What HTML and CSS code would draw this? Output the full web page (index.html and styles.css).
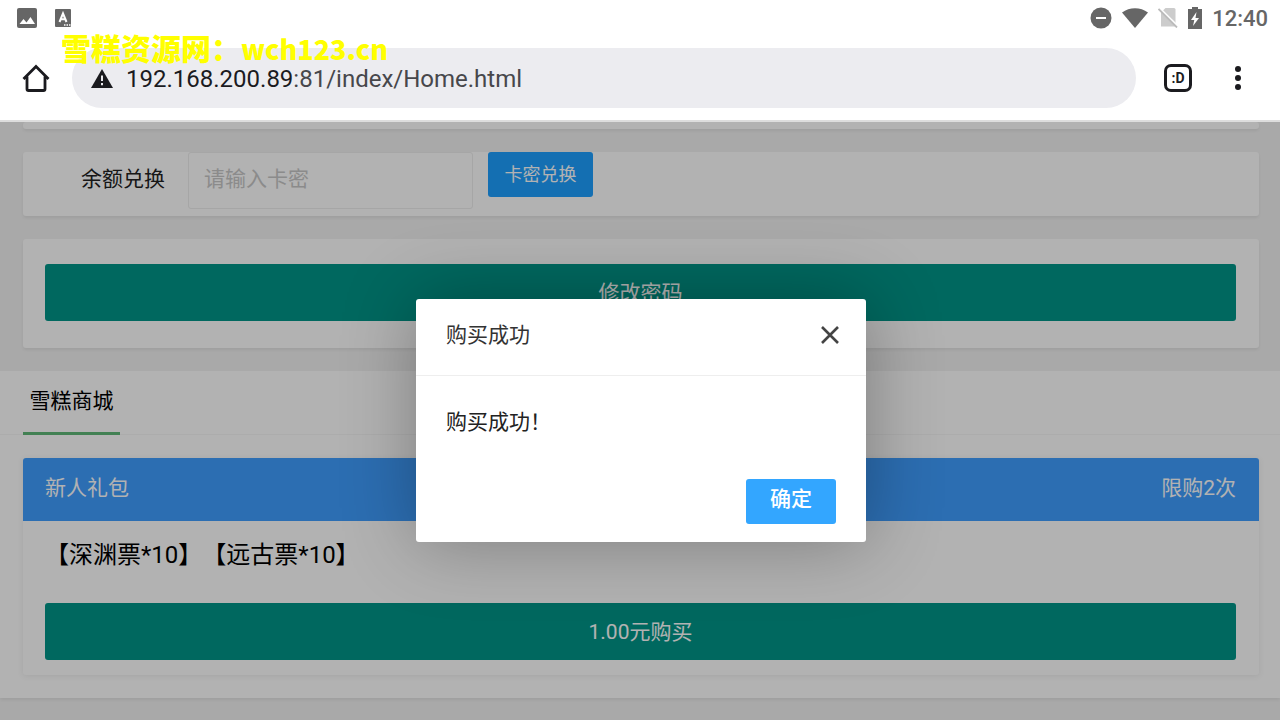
FILE: index.html
```
<!DOCTYPE html>
<html lang="zh-CN">

<head>
    <meta charset="utf-8">
    <meta name="viewport" content="width=device-width, initial-scale=1" />
    <title>Home</title>
    <link rel="stylesheet" href="styles.css">
</head>

<body>
    <div class="status">
        <svg width="20" height="20" viewBox="0 0 20 20">
            <rect width="20" height="20" rx="2" fill="#666" />
            <path d="M2.500 16 6.500 11l3 3.500 4-5.500 4.500 7z" fill="#fff" />
        </svg>
        <svg width="16" height="18" viewBox="0 0 16 18">
            <rect width="16" height="18" rx="1" fill="#666" />
            <path d="M4.500 13 8 4.500 11.500 13M5.800 10.200h4.400" fill="none" stroke="#fff" stroke-width="2" />
            <path d="M9 16h1.500M11.500 16H13M14 16h1.500" stroke="#fff" stroke-width="1.500" />
        </svg>
        <div class="status-right">
            <svg width="22" height="22" viewBox="0 0 22 22">
                <circle cx="11" cy="11" r="10.500" fill="#666" />
                <path d="M6 11h10" stroke="#fff" stroke-width="2" />
            </svg>
            <svg width="26" height="20" viewBox="0 0 26 20">
                <path d="M0 4.500C7.500-1.300 18.500-1.300 26 4.500L13 20z" fill="#666" />
            </svg>
            <svg width="20" height="20" viewBox="0 0 20 20">
                <path d="M7.500 0H16a1.500 1.500 0 0 1 1.500 1.500v17H3V4.500z" fill="#ccc" />
                <path d="M1.500 0 20 18.500" stroke="#fff" stroke-width="2" />
                <path d="M.5 1 19 19.500" stroke="#bbb" stroke-width="1.800" />
            </svg>
            <svg width="14" height="22" viewBox="0 0 14 22">
                <path d="M4 0h6v2h4v20H0V2h4z" fill="#666" />
                <path d="M8.500 5 3 13h3.300l-1.300 6L11 11H7.500z" fill="#fff" />
            </svg>
            <span class="clock">12:40</span>
        </div>
    </div>

    <div class="toolbar">
        <svg width="28" height="28" viewBox="0 0 28 28" fill="none" stroke="#1b1b1f" stroke-width="2.800">
            <path d="M1.500 15 14 2.500 26.500 15M5 12.500V25q0 1.500 1.500 1.500h15q1.500 0 1.500-1.500V12.500" />
        </svg>
        <div class="url">
            <svg width="22" height="19" viewBox="0 0 22 19">
                <path d="M11 0 22 19H0z" fill="#1b1b1f" />
                <path d="M11 6.500v5.500M11 14v2.200" stroke="#ececf0" stroke-width="2" />
            </svg>
            <span class="addr"><b>192.168.200.89</b>:81/index/Home.html</span>
        </div>
        <button class="tabs" type="button">:D</button>
        <button class="more" type="button" aria-label="菜单">
            <svg width="8" height="26" viewBox="0 0 8 26" fill="#1b1b1f">
                <circle cx="4" cy="4" r="3" />
                <circle cx="4" cy="13" r="3" />
                <circle cx="4" cy="22" r="3" />
            </svg>
        </button>
        <div class="mark">雪糕资源网：<span>wch123.cn</span></div>
    </div>

    <div class="page">
        <div class="wrap">
            <div class="card card-end"></div>
            <form class="card exchange">
                <label for="cdk">余额兑换</label>
                <input id="cdk" name="cdk" type="text" placeholder="请输入卡密">
                <button class="btn-sm" type="button">卡密兑换</button>
            </form>
            <div class="card pass">
                <button class="btn" type="button">修改密码</button>
            </div>
        </div>
        <div class="shop">
            <div class="tab-title">
                <a class="tab" href="#shop">雪糕商城</a>
            </div>
            <div class="tab-body" id="shop">
                <div class="card">
                    <div class="gift-head"><span>新人礼包</span><span>限购2次</span></div>
                    <div class="gift-body">
                        <p>【深渊票*10】【远古票*10】</p>
                        <button class="btn" type="button">1.00元购买</button>
                    </div>
                </div>
            </div>
        </div>

        <div class="shade">
            <div class="layer" role="dialog" aria-labelledby="layer-title">
                <div class="layer-title">
                    <span id="layer-title">购买成功</span>
                    <button class="close" type="button" aria-label="关闭">
                        <svg width="20" height="20" viewBox="0 0 20 20">
                            <path d="M2 2l16 16M18 2L2 18" stroke="#444" stroke-width="2.600" />
                        </svg>
                    </button>
                </div>
                <div class="layer-content">购买成功！</div>
                <div class="layer-btn"><button class="ok" type="button">确定</button></div>
            </div>
        </div>
    </div>
</body>

</html>
```
FILE: styles.css
```
* {
    box-sizing: border-box;
}

body {
    margin: 0;
    height: 100vh;
    display: flex;
    flex-direction: column;
    overflow: hidden;
    background: #fff;
    color: #222;
    font-family: Roboto, "Noto Sans CJK SC", sans-serif;
    font-size: 21px;
    line-height: 30px;
    text-spacing-trim: space-all;
}

button,
input {
    font: inherit;
    border: 0;
    padding: 0;
    margin: 0;
}

svg {
    display: block;
    flex: none;
}

/* android status bar */
.status {
    height: 36px;
    padding: 0 12px 0 17px;
    display: flex;
    align-items: center;
    gap: 18px;
}

.status-right {
    margin-left: auto;
    display: flex;
    align-items: center;
    gap: 10px;
}

.clock {
    padding-top: 2px;
    color: #666;
    font-size: 22px;
    font-weight: 500;
}

/* browser toolbar */
.toolbar {
    position: relative;
    height: 86px;
    padding: 0 22px;
    display: flex;
    align-items: center;
    border-bottom: 2px solid #ddd;
}

.url {
    flex: 1;
    height: 60px;
    margin: 0 28px 0 22px;
    padding: 0 19px;
    display: flex;
    align-items: center;
    gap: 13px;
    border-radius: 30px;
    background: #ececf0;
}

.addr {
    padding-top: 2px;
    font-size: 24px;
    color: #47474b;
}

.addr b {
    font-weight: 400;
    color: #1b1b1f;
}

.tabs {
    width: 28px;
    height: 28px;
    border: 3px solid #1b1b1f;
    border-radius: 7px;
    background: none;
    color: #1b1b1f;
    font-size: 14px;
    font-weight: 700;
    line-height: 20px;
}

.more {
    width: 40px;
    margin-left: 26px;
    display: flex;
    justify-content: center;
    background: none;
}

.mark {
    position: absolute;
    top: -9px;
    left: 61px;
    color: #ff0;
    font-family: "Noto Sans CJK SC", sans-serif;
    font-size: 30px;
    font-weight: 900;
    line-height: 40px;
}

.mark span {
    font-size: 27px;
}

/* page */
.page {
    position: relative;
    flex: 1;
    overflow: hidden;
    background: #f2f2f2;
}

.wrap {
    padding: 0 21px 0 23px;
}

.card {
    margin-bottom: 23px;
    border-radius: 3px;
    background: #fff;
    box-shadow: 0 2px 3px rgba(0, 0, 0, .06);
}

.card-end {
    height: 7px;
}

.exchange {
    height: 64px;
    display: flex;
    align-items: flex-start;
}

.exchange label {
    width: 165px;
    padding: 12px 23px 0 0;
    text-align: right;
}

.exchange input {
    width: 285px;
    height: 57px;
    margin-right: 15px;
    padding: 0 15px 4px;
    border: 1px solid #eee;
    border-radius: 3px;
    background: #fff;
}

.exchange input::placeholder {
    color: #c8c8c8;
}

.btn-sm {
    width: 105px;
    height: 45px;
    border-radius: 3px;
    background: #1e9fff;
    color: #fff;
    font-size: 18px;
}

.pass {
    padding: 25px 23px 27px 22px;
}

.btn {
    display: block;
    width: 100%;
    height: 57px;
    border-radius: 3px;
    background: #009688;
    color: #fff;
}

.shop {
    background: #fff;
    box-shadow: 0 2px 3px rgba(0, 0, 0, .06);
}

.tab-title {
    height: 64px;
    padding-left: 23px;
    border-bottom: 1px solid #f6f6f6;
}

.tab {
    display: block;
    width: 97px;
    height: 64px;
    padding-top: 15px;
    border-bottom: 3px solid #5fb878;
    color: #000;
    text-align: center;
    text-decoration: none;
}

.tab-body {
    padding: 23px 21px 23px 23px;
}

.tab-body .card {
    margin: 0;
    box-shadow: 0 1px 6px rgba(0, 0, 0, .08);
}

.gift-head {
    height: 63px;
    padding: 15px 23px 0 22px;
    display: flex;
    justify-content: space-between;
    border-radius: 3px 3px 0 0;
    background: #409eff;
    color: #fff;
}

.gift-body {
    padding: 16px 23px 15px 22px;
}

.gift-body p {
    margin: 0 0 30px;
    color: #000;
    font-size: 24px;
    line-height: 36px;
}

/* layer */
.shade {
    position: absolute;
    inset: 0;
    padding: 0 0 2px 2px;
    display: flex;
    align-items: center;
    justify-content: center;
    background: rgba(0, 0, 0, .3);
}

.layer {
    width: 450px;
    border-radius: 3px;
    background: #fff;
    box-shadow: 1px 1px 75px rgba(0, 0, 0, .3);
}

.layer-title {
    height: 77px;
    padding: 0 26px 4px 30px;
    display: flex;
    align-items: center;
    justify-content: space-between;
    border-bottom: 1px solid #eee;
    color: #333;
}

.close {
    background: none;
}

.layer-content {
    padding: 30px;
    line-height: 33px;
}

.layer-btn {
    padding: 10px 30px 18px;
    text-align: right;
    line-height: 0;
}

.ok {
    width: 90px;
    height: 45px;
    padding-bottom: 4px;
    border-radius: 3px;
    background: #33a6ff;
    color: #fff;
    font-weight: 500;
    line-height: 30px;
}
```
